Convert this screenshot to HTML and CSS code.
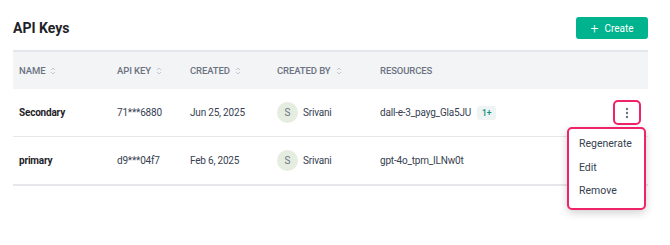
FILE: index.html
```html
<!DOCTYPE html>
<html lang="en">
<head>
  <meta charset="UTF-8">
  <title>API Keys</title>
  <link rel="stylesheet" href="styles.css">
</head>
<body>
<div class="page">
  <div class="page-header">
    <h1>API Keys</h1>
    <button class="create-btn"><span class="plus">+</span> Create</button>
  </div>

  <div class="keys">
    <div class="row head">
      <div class="cell">Name <svg class="sort" width="6" height="10" viewBox="0 0 6 10"><path d="M1 4 L3 2 L5 4 M1 6 L3 8 L5 6" fill="none" stroke="#c4c8ce" stroke-width="1"/></svg></div>
      <div class="cell">API Key <svg class="sort" width="6" height="10" viewBox="0 0 6 10"><path d="M1 4 L3 2 L5 4 M1 6 L3 8 L5 6" fill="none" stroke="#c4c8ce" stroke-width="1"/></svg></div>
      <div class="cell">Created <svg class="sort" width="6" height="10" viewBox="0 0 6 10"><path d="M1 4 L3 2 L5 4 M1 6 L3 8 L5 6" fill="none" stroke="#c4c8ce" stroke-width="1"/></svg></div>
      <div class="cell">Created By <svg class="sort" width="6" height="10" viewBox="0 0 6 10"><path d="M1 4 L3 2 L5 4 M1 6 L3 8 L5 6" fill="none" stroke="#c4c8ce" stroke-width="1"/></svg></div>
      <div class="cell">Resources</div>
      <div class="cell"></div>
    </div>

    <div class="row item first">
      <div class="cell name">Secondary</div>
      <div class="cell">71***6880</div>
      <div class="cell">Jun 25, 2025</div>
      <div class="cell"><span class="avatar">S</span>Srivani</div>
      <div class="cell">dall-e-3_payg_Gla5JU <span class="badge">1+</span></div>
      <div class="cell actions">
        <div class="menu-wrap">
          <button class="kebab"><svg width="4" height="12" viewBox="0 0 4 12"><circle cx="2" cy="2" r="1.2" fill="#6b7280"/><circle cx="2" cy="6" r="1.2" fill="#6b7280"/><circle cx="2" cy="10" r="1.2" fill="#6b7280"/></svg></button>
          <ul class="menu">
            <li>Regenerate</li>
            <li>Edit</li>
            <li>Remove</li>
          </ul>
        </div>
      </div>
    </div>

    <div class="row item">
      <div class="cell name">primary</div>
      <div class="cell">d9***04f7</div>
      <div class="cell">Feb 6, 2025</div>
      <div class="cell"><span class="avatar">S</span>Srivani</div>
      <div class="cell">gpt-4o_tpm_ILNw0t</div>
      <div class="cell actions"></div>
    </div>
  </div>
</div>
</body>
</html>
```

FILE: styles.css
```css
* {
  margin: 0;
  padding: 0;
  box-sizing: border-box;
}

html, body {
  min-height: 100%;
}

body {
  font-family: 'Roboto', 'Liberation Sans', sans-serif;
  background: #fff;
  color: #1f2937;
  min-height: 245px;
}

.page {
  padding: 17px 22px 50px 13px;
  min-height: 245px;
}

.page-header {
  display: flex;
  justify-content: space-between;
  align-items: center;
  height: 22px;
  margin-bottom: 11px;
}

h1 {
  font-size: 14px;
  font-weight: 700;
  color: #1f2328;
}

.create-btn {
  width: 72px;
  height: 22px;
  background: #00b38f;
  color: #fff;
  border: none;
  border-radius: 3px;
  font-family: inherit;
  font-size: 10px;
  display: flex;
  align-items: center;
  justify-content: center;
  gap: 6px;
}

.create-btn .plus {
  font-size: 14px;
  font-weight: 300;
  line-height: 1;
  margin-top: -1px;
}

.keys {
  width: 100%;
}

.row {
  display: grid;
  grid-template-columns: 98px 73px 87px 103px 1fr 35px;
  align-items: center;
}

.cell {
  padding-left: 6px;
  white-space: nowrap;
  display: flex;
  align-items: center;
}

.head {
  height: 39px;
  background: #f3f4f6;
  border-top: 2px solid #e3e6eb;
}

.head .cell {
  font-weight: 500;
  font-size: 9.5px;
  letter-spacing: -0.1px;
  text-transform: uppercase;
  color: #6b7280;
}

.sort {
  margin-left: 5px;
}

.item {
  height: 49px;
  border-bottom: 2px solid #e5e7eb;
  font-size: 10px;
  letter-spacing: -0.2px;
  color: #374151;
}

.item.first {
  height: 48px;
  border-bottom-width: 1px;
}

.item .name {
  font-weight: 700;
  color: #1f2328;
}

.avatar {
  width: 21px;
  height: 21px;
  margin-right: 5px;
  border-radius: 50%;
  background: #e5ede1;
  color: #6b7280;
  font-size: 10px;
  letter-spacing: 0;
  display: flex;
  align-items: center;
  justify-content: center;
}

.badge {
  margin-left: 6px;
  padding: 2px 5px;
  background: #eef3f3;
  color: #0e8f7a;
  font-size: 8.5px;
  font-weight: 500;
  border-radius: 3px;
}

.actions {
  padding: 0;
}

.menu-wrap {
  position: relative;
}

.kebab {
  width: 28px;
  height: 25px;
  background: #fff;
  border: 2px solid #f0226a;
  border-radius: 5px;
  display: flex;
  align-items: center;
  justify-content: center;
}

.menu {
  position: absolute;
  top: 27px;
  right: -5px;
  width: 79px;
  list-style: none;
  background: #fff;
  border: 2px solid #f0226a;
  border-radius: 5px;
  box-shadow: 0 3px 9px rgba(0, 0, 0, 0.18);
  padding: 3px 0 5px;
  z-index: 2;
}

.menu li {
  font-size: 10.5px;
  letter-spacing: 0;
  color: #374151;
  padding: 0 0 0 10px;
  line-height: 23.5px;
}
```
